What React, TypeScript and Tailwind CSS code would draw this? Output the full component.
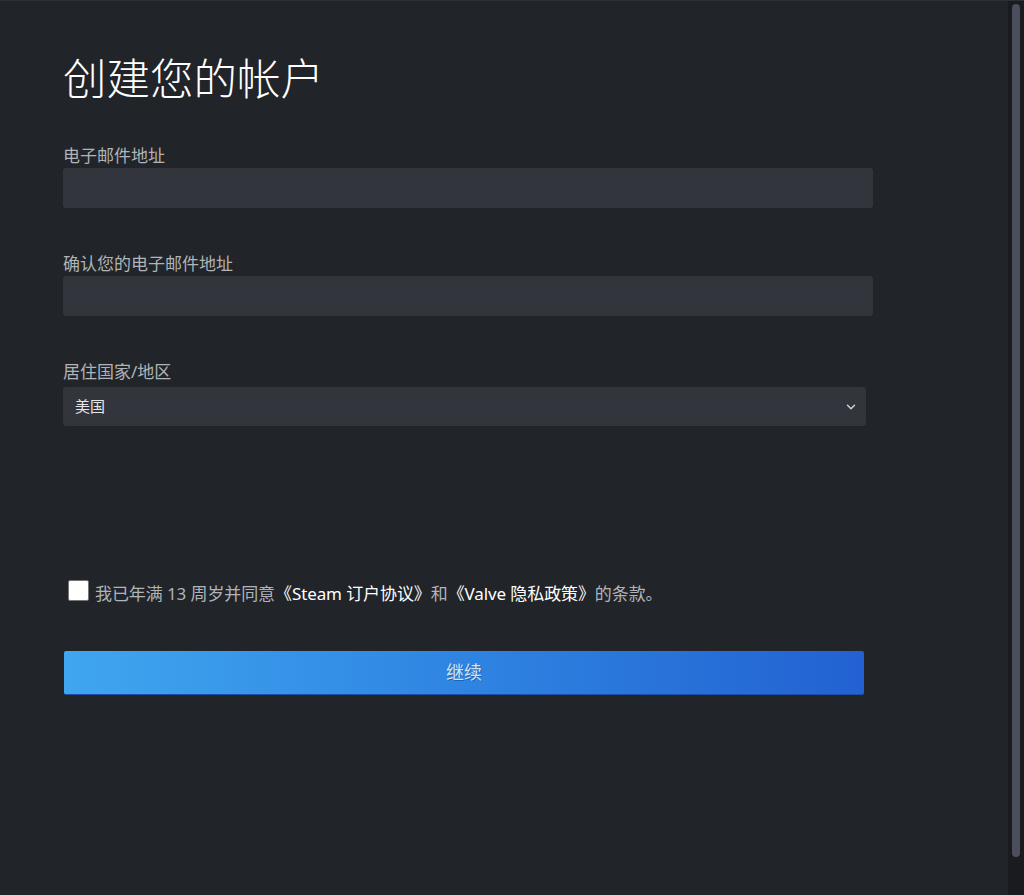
import { ChevronDown } from "lucide-react";

function Field({ label, className }: { label: string; className?: string }) {
  return (
    <div className={className}>
      <div className="text-[17px] leading-[20px] text-[#b0b4b8]">{label}</div>
      <div className="mt-[2px] h-[40px] w-[810px] rounded-[3px] bg-[#32353c]" />
    </div>
  );
}

export default function App() {
  return (
    <div
      className="flex h-[895px] w-full overflow-hidden border-t border-[#2c2f35] bg-[#212429]"
      style={{ fontFamily: '"Noto Sans", "Noto Sans CJK SC", sans-serif' }}
    >
      <div className="flex-1 pl-[63px] pt-[53px]">
        <h1 className="text-[43.5px] font-light leading-[48px] text-white">创建您的帐户</h1>

        <Field label="电子邮件地址" className="mt-[44px]" />
        <Field label="确认您的电子邮件地址" className="mt-[46px]" />

        <div className="mt-[46px]">
          <div className="text-[17px] leading-[20px] text-[#b0b4b8]">居住国家/地区</div>
          <div className="mt-[5px] flex h-[39px] w-[803px] items-center justify-between rounded-[3px] bg-[#32353c] pl-[12px] pr-[8px]">
            <span className="text-[15px] text-[#e6e7e8]">美国</span>
            <ChevronDown size={14} strokeWidth={2.5} className="text-[#d0d2d4]" />
          </div>
        </div>

        <div className="mt-[154px] flex items-start pl-[5px]">
          <div className="h-[21px] w-[21px] shrink-0 rounded-[2px] border border-[#767676] bg-white" />
          <div className="ml-[6px] mt-[3px] text-[17px] leading-[22px] tracking-[-0.1px] text-[#b0b4b8]">
            我已年满 13 周岁并同意<span className="text-white">《Steam 订户协议》</span>和
            <span className="text-white">《Valve 隐私政策》</span>的条款。
          </div>
        </div>

        <button className="mt-[46px] ml-[1px] flex h-[44px] w-[800px] items-center justify-center rounded-[2px] border-b border-[#1d4fa8] bg-gradient-to-r from-[#40a6f0] to-[#2361d2] text-[18px] text-[#cde2f6] [text-shadow:1px_1px_0_rgba(0,0,0,0.25)]">
          继续
        </button>
      </div>

      <div className="flex w-[16px] shrink-0 justify-center bg-[#1a1b1e] pt-[3px]">
        <div className="h-[853px] w-[8px] rounded-full bg-[#4a4f5b]" />
      </div>
    </div>
  );
}
